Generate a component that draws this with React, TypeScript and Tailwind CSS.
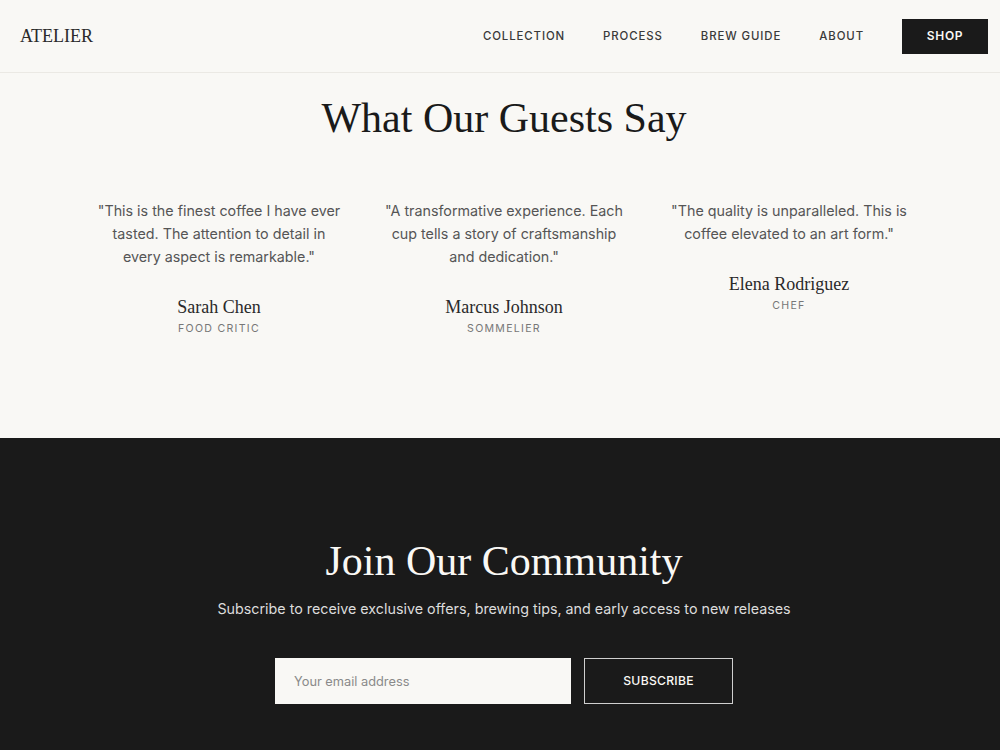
import React from 'react';

const serif = "font-['Liberation_Serif',_'DejaVu_Serif',_serif]";
const sans = "font-['Inter',_'Liberation_Sans',_sans-serif]";

const NAV_LINKS = ['Collection', 'Process', 'Brew Guide', 'About'];

const TESTIMONIALS = [
  {
    quote: '"This is the finest coffee I have ever tasted. The attention to detail in every aspect is remarkable."',
    name: 'Sarah Chen',
    role: 'Food Critic',
  },
  {
    quote: '"A transformative experience. Each cup tells a story of craftsmanship and dedication."',
    name: 'Marcus Johnson',
    role: 'Sommelier',
  },
  {
    quote: '"The quality is unparalleled. This is coffee elevated to an art form."',
    name: 'Elena Rodriguez',
    role: 'Chef',
  },
];

const Header: React.FC = () => (
  <header className="h-[73px] flex items-center justify-between pl-5 pr-5 border-b border-[#ebe9e4] bg-[#f9f8f5]">
    <a className={`${serif} text-[18px] text-[#2a2a2a]`}>ATELIER</a>
    <nav className="flex items-center gap-[38px]">
      {NAV_LINKS.map((link) => (
        <a key={link} className={`${sans} mt-[2px] text-[11.4px] font-medium uppercase tracking-[0.08em] text-[#3a3a3a]`}>
          {link}
        </a>
      ))}
      <button className={`${sans} h-[35px] w-[86px] bg-[#1a1a1a] text-[#f9f8f5] text-[12px] font-semibold tracking-[0.06em]`}>
        SHOP
      </button>
    </nav>
  </header>
);

const Testimonials: React.FC = () => (
  <section className="bg-[#f9f8f5] pt-[20px] pb-[101px]">
    <h2 className={`${serif} text-center text-[42px] leading-[50px] text-[#1a1a1a]`}>What Our Guests Say</h2>
    <div className="mx-auto mt-[56px] grid max-w-[823px] grid-cols-3 gap-8">
      {TESTIMONIALS.map((t) => (
        <div key={t.name} className="flex flex-col items-center text-center">
          <p className={`${sans} text-[14.3px] leading-[23px] text-[#555]`}>{t.quote}</p>
          <p className={`${serif} mt-[26px] text-[18px] leading-[26px] text-[#2a2a2a]`}>{t.name}</p>
          <p className={`${sans} mt-[1px] text-[10.6px] leading-[16px] uppercase tracking-[0.12em] text-[#777]`}>{t.role}</p>
        </div>
      ))}
    </div>
  </section>
);

const Newsletter: React.FC = () => (
  <section className="bg-[#1a1a1a] pt-[98px] pb-[80px] text-center">
    <h2 className={`${serif} text-[42px] leading-[50px] text-[#f9f8f5]`}>Join Our Community</h2>
    <p className={`${sans} mt-[11px] text-[14.3px] leading-[24px] text-[#dcdcdc]`}>
      Subscribe to receive exclusive offers, brewing tips, and early access to new releases
    </p>
    <form className="mt-[37px] flex justify-center gap-[13px]" onSubmit={(e) => e.preventDefault()}>
      <input
        type="email"
        placeholder="Your email address"
        className={`${sans} h-[46px] w-[296px] bg-[#f9f8f5] px-[19px] text-[12.8px] text-[#333] placeholder:text-[#8a8a8a] outline-none`}
      />
      <button
        type="submit"
        className={`${sans} h-[46px] w-[149px] border border-[#cfcfcf] text-[12.2px] font-medium text-[#f9f8f5] tracking-[0.02em]`}
      >
        SUBSCRIBE
      </button>
    </form>
  </section>
);

export default function App() {
  return (
    <div className="min-h-screen overflow-hidden bg-[#1a1a1a]">
      <div className="w-[1008px]">
        <Header />
        <Testimonials />
        <Newsletter />
      </div>
    </div>
  );
}
